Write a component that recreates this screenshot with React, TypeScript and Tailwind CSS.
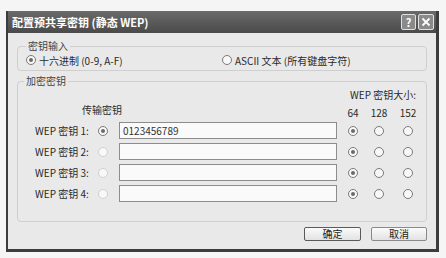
import React from "react";

const font = { fontFamily: '"Noto Sans CJK SC", "Liberation Sans", sans-serif' };

function Radio({ checked = false, disabled = false }: { checked?: boolean; disabled?: boolean }) {
  return (
    <span
      className={`flex h-[10px] w-[10px] items-center justify-center rounded-full border bg-[#f8f8f8] ${
        disabled ? "border-[#d0d0d0]" : "border-[#7a7a7a]"
      }`}
    >
      {checked && <span className="h-[4px] w-[4px] rounded-full bg-[#6a6a6a]" />}
    </span>
  );
}

function KeyRow({ n, value, first }: { n: number; value?: string; first?: boolean }) {
  return (
    <div className="flex h-[17px] items-center">
      <span className="w-[72px] whitespace-pre pl-[17px] text-[10px] text-[#2a2a2a]">{`WEP 密钥 ${n}:`}</span>
      <span className="flex w-[26px] justify-center">
        <Radio checked={first} disabled={!first} />
      </span>
      <div className="ml-[3px] flex h-[17px] w-[218px] items-center border border-[#8c8c8c] bg-[#fafafa] pl-[3px] text-[10px] text-[#333]">
        {value}
      </div>
      <div className="ml-[11px] flex items-center">
        <span className="flex w-[10px] justify-center"><Radio checked /></span>
        <span className="ml-[16px] flex w-[10px] justify-center"><Radio /></span>
        <span className="ml-[19px] flex w-[10px] justify-center"><Radio /></span>
      </div>
    </div>
  );
}

export default function App() {
  return (
    <div className="h-[258px] w-[446px] bg-[#f5f5f5] pl-[6px] pt-[11px]" style={font}>
      <div className="flex h-[241px] w-[433px] flex-col border-b-[3px] border-l-[2px] border-r-[3px] border-[#3c3c3c] bg-[#e9e9e9]">
        {/* Title bar */}
        <div className="flex h-[22px] shrink-0 items-center justify-between bg-gradient-to-b from-[#6a6a6a] to-[#4a4a4a] pl-[4px] pr-[2px]">
          <span className="text-[11px] font-bold text-white">配置预共享密钥 (静态 WEP)</span>
          <div className="flex gap-[2px]">
            <span className="flex h-[16px] w-[15px] items-center justify-center rounded-[2px] border border-[#e0e0e0] bg-[#8a8a8a] text-[11px] font-bold leading-none text-white">?</span>
            <span className="flex h-[16px] w-[16px] items-center justify-center rounded-[2px] border border-[#e0e0e0] bg-[#8a8a8a]">
              <svg width="10" height="10" viewBox="0 0 10 10">
                <path d="M1.5 1.5 L8.5 8.5 M8.5 1.5 L1.5 8.5" stroke="#fff" strokeWidth="1.8" />
              </svg>
            </span>
          </div>
        </div>

        {/* Body */}
        <div className="flex flex-col px-[9px] pt-[7px]">
          <fieldset className="h-[31px] rounded-[4px] border border-[#cfcfcf] px-[8px]">
            <legend className="px-[2px] text-[10px] leading-[12px] text-[#444]">密钥输入</legend>
            <div className="mt-[2px] flex h-[12px] items-center text-[10px] text-[#2a2a2a]">
              <Radio checked />
              <span className="ml-[3px] w-[183px]">十六进制 (0-9, A-F)</span>
              <Radio />
              <span className="ml-[3px]">ASCII 文本 (所有键盘字符)</span>
            </div>
          </fieldset>

          <fieldset className="mt-[4px] h-[147px] rounded-[4px] border border-[#cfcfcf]">
            <legend className="ml-[6px] px-[2px] text-[10px] leading-[12px] text-[#444]">加密密钥</legend>
            <div className="flex h-[35px] flex-col pt-[2px]">
              <div className="flex justify-end pr-[10px] text-[10px] leading-[12px] text-[#2a2a2a]">WEP 密钥大小:</div>
              <div className="mt-[2px] flex items-start text-[10px] text-[#2a2a2a]">
                <span className="ml-[64px] leading-[14px]">传输密钥</span>
                <div className="ml-auto mt-[3px] flex pr-[9px] leading-[14px]">
                  <span className="w-[14px] text-center">64</span>
                  <span className="ml-[10px] w-[18px] text-center">128</span>
                  <span className="ml-[11px] w-[18px] text-center">152</span>
                </div>
              </div>
            </div>
            <div className="flex flex-col gap-[4px]">
              <KeyRow n={1} value="0123456789" first />
              <KeyRow n={2} />
              <KeyRow n={3} />
              <KeyRow n={4} />
            </div>
          </fieldset>

          <div className="mt-[5px] flex justify-end gap-[10px]">
            <button className="h-[14px] w-[57px] rounded-[2px] border border-[#5a5a5a] bg-gradient-to-b from-[#fbfbfb] to-[#e2e2e2] text-[10px] leading-[12px] text-[#222]">确定</button>
            <button className="h-[14px] w-[56px] rounded-[2px] border border-[#8a8a8a] bg-gradient-to-b from-[#fbfbfb] to-[#e2e2e2] text-[10px] leading-[12px] text-[#222]">取消</button>
          </div>
        </div>
      </div>
    </div>
  );
}
